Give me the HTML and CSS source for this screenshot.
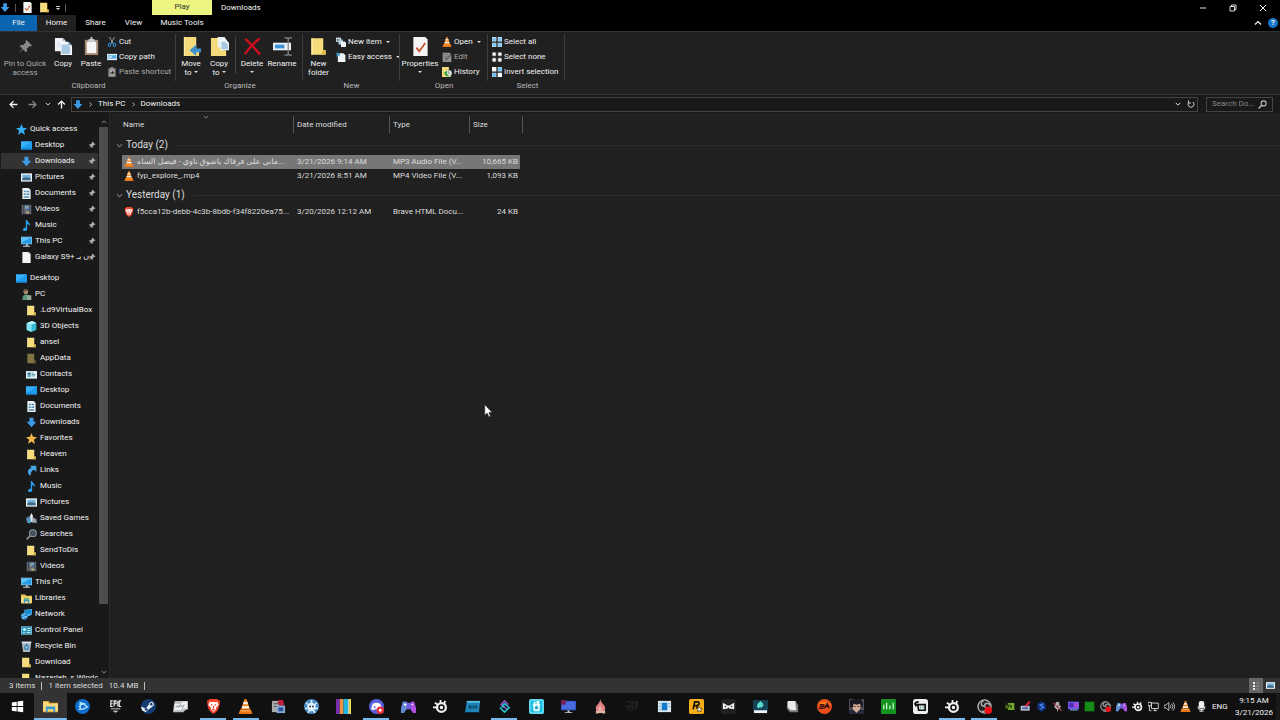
FILE: index.html
```html
<!DOCTYPE html>
<html lang="en">
<head>
<meta charset="utf-8">
<title>Downloads</title>
<link rel="stylesheet" href="styles.css">
</head>
<body>
<svg class="sprite" aria-hidden="true">
  <symbol id="down" viewBox="0 0 16 16"><path d="M5 1h6v6h4l-7 8-7-8h4z" fill="#3d9be6"/></symbol>
  <symbol id="check" viewBox="0 0 16 16"><path d="M2 0h10l2 2v14H2z" fill="#f4f4f4"/><path d="M4.500 9l2.500 3 5-7" fill="none" stroke="#c8562a" stroke-width="1.500"/></symbol>
  <symbol id="folder" viewBox="0 0 16 16"><path d="M2 1h10v10h2v4H2z" fill="#f7dc7c"/><path d="M12 11h2v4h-4z" fill="#e2b94c"/><path d="M2 1h1v14H2z" fill="#fff0ae"/></symbol>
  <symbol id="folder-dim" viewBox="0 0 16 16"><path d="M2 1h10v10h2v4H2z" fill="#837444"/><path d="M12 11h2v4h-4z" fill="#675b36"/></symbol>
  <symbol id="pin" viewBox="0 0 16 16"><path d="M9 1l6 6-1.500 1-1-.5-3 3 .2 2.500-1.200 1.200-3-3L1 15l3.800-4.500-3-3L3 6.300l2.500.2 3-3L8 2z" fill="currentColor"/></symbol>
  <symbol id="copy" viewBox="0 0 20 20"><path d="M1 1h8l3 3v11H1z" fill="#eef2f6"/><path d="M9 1l3 3H9zM3 6h6M3 8h6M3 10h6" fill="#a9b9c6" stroke="#bccbd8" stroke-width=".6"/><path d="M7 5h8l4 4v10H7z" fill="#f5f9fc"/><path d="M8 8h6l3 3v7H8z" fill="#a9cbe2"/><path d="M15 5l4 4h-4z" fill="#7da6c5"/></symbol>
  <symbol id="paste" viewBox="0 0 20 20"><path d="M3 3h14v16H3z" fill="#a58b72"/><path d="M5 5h10v12H5z" fill="#f5f5f5"/><path d="M7 3V2h2V0h2v2h2v1l1 2H6z" fill="#c7cdd2"/></symbol>
  <symbol id="cut" viewBox="0 0 16 16"><path d="M4 0l6 11M12 0L6 11" stroke="#9aa7b2" stroke-width="1.500"/><g fill="none" stroke="#2c84c9" stroke-width="1.800"><ellipse cx="4" cy="12.500" rx="2" ry="2.600"/><ellipse cx="12" cy="12.500" rx="2" ry="2.600"/></g></symbol>
  <symbol id="path" viewBox="0 0 16 16"><path d="M0 3h16v10H0z" fill="#e6f2fa"/><path d="M1 5h14v6H1z" fill="#5aaee0"/><path d="M2 6l1.500 4L5 7l1 3 1.500-4M9 10h1M12 10h1" fill="none" stroke="#fff" stroke-width="1"/></symbol>
  <symbol id="shortcut" viewBox="0 0 16 16"><path d="M2 2h12v14H2z" fill="#7d7d7d"/><path d="M4 4h8v10H4z" fill="#aaa"/><path d="M6 0h4l1 3H5z" fill="#8e8e8e"/><path d="M5 12c0-3 1-4 3-4V6l4 3-4 3v-2c-1 0-2 .5-3 2z" fill="#333"/></symbol>
  <symbol id="moveto" viewBox="0 0 20 20"><path d="M2 0h13v13h3v7H2z" fill="#f5da7b"/><path d="M2 0h1v20H2z" fill="#fff0ae"/><path d="M20 12h-5V8l-7 6 7 6v-4h5z" fill="#3d94cf"/></symbol>
  <symbol id="copyto" viewBox="0 0 20 20"><path d="M1 1h13v13h3v6H1z" fill="#f5da7b"/><path d="M8 0h7l2 2v9H8z" fill="#eef2f6"/><path d="M11 3h6l3 3v8h-9z" fill="#f5f9fc"/><path d="M12 5h4l3 3v5h-7z" fill="#a9cbe2"/></symbol>
  <symbol id="delete" viewBox="0 0 20 20"><path d="M2.500 2Q9 8 18 18.500M17.500 1.500Q9 8 2 18" fill="none" stroke="#c9101e" stroke-width="2.600"/></symbol>
  <symbol id="rename" viewBox="0 0 20 20"><path d="M0 6h19v8H0z" fill="#e9f1f8"/><path d="M2 8h10v4H2z" fill="#3b93d6"/><path d="M12 1h3l1 1 1-1h3M16 2v16M12 19h3l1-1 1 1h3" fill="none" stroke="#888" stroke-width="1.300"/></symbol>
  <symbol id="newitem" viewBox="0 0 16 16"><path d="M0 1h8v7H0z" fill="#d8e3ea"/><path d="M1 3h6v4H1z" fill="#6c8494"/><path d="M4 4h7v8H4z" fill="#b8cfdd"/><path d="M8 7h6l2 2v7H8z" fill="#f1f4f6"/></symbol>
  <symbol id="easy" viewBox="0 0 16 16"><path d="M3 2h9l3 3v11H3z" fill="#f0f3f5"/><path d="M0 1h6v6L4 5 1 9V4z" fill="#3c8fc5"/></symbol>
  <symbol id="cone" viewBox="0 0 16 16"><path d="M7 0h2l3.800 11H3.200z" fill="#f08019"/><path d="M6 3h4l.8 2.500H5.200zM4.700 7.500h6.600l.8 2.500H3.900z" fill="#f3eee6"/><path d="M2.500 11h11L15.500 16H.5z" fill="#e77412"/><path d="M3 12h10l.5 1.200h-11z" fill="#ffae52"/></symbol>
  <symbol id="edit" viewBox="0 0 16 16"><path d="M1 1h11l3 3v12H1z" fill="#929292"/><path d="M3 4h7M3 7h6M3 10h4" stroke="#666"/><path d="M16 4L7 13l-2 2 1-4 8-8z" fill="#555"/></symbol>
  <symbol id="history" viewBox="0 0 16 16"><path d="M0 0h11v11h3v5H0z" fill="#f5da7b"/><circle cx="10.500" cy="10" r="5" fill="#e3ebe5" stroke="#a8b9ad"/><path d="M10 6v4h3" fill="none" stroke="#667" /><path d="M3 9l5-3v3c0 2 1 4 4 5-5 2-8-1-8-4z" fill="#34a647"/></symbol>
  <symbol id="selall" viewBox="0 0 16 16"><path d="M0 0h7v7H0zM9 0h7v7H9zM0 9h7v7H0zM9 9h7v7H9z" fill="#bfe1f7"/><path d="M1 1h5v5H1zM10 1h5v5h-5zM1 10h5v5H1zM10 10h5v5h-5z" fill="#7cc3f1"/></symbol>
  <symbol id="selnone" viewBox="0 0 16 16"><path d="M1 1h5v5H1zM10 1h5v5h-5zM1 10h5v5H1zM10 10h5v5h-5z" fill="#fff" stroke="#bbb"/></symbol>
  <symbol id="selinv" viewBox="0 0 16 16"><path d="M0 0h7v7H0zM9 9h7v7H9z" fill="#f5f9fb"/><path d="M9 0h7v7H9zM0 9h7v7H0z" fill="#a9d5f3"/><path d="M10 1h5v5h-5zM1 10h5v5H1z" fill="#6cb8ec"/></symbol>
  <symbol id="star" viewBox="0 0 16 16"><path d="M8 0l2.200 5.600 5.800.4-4.500 3.700L13 16l-5-3.500L3 16l1.500-6.300L0 6l5.800-.4z" fill="currentColor"/></symbol>
  <symbol id="desktop" viewBox="0 0 16 16"><path d="M0 2h16v12H0z" fill="#1e9df0"/><path d="M0 12.500h16V14H0z" fill="#1178bd"/><path d="M0 2h16L0 12z" fill="#38b0fa"/></symbol>
  <symbol id="pictures" viewBox="0 0 16 16"><path d="M0 2h16v12H0z" fill="#eef1f3"/><path d="M2 4h12v8H2z" fill="#73b4dc"/><path d="M2 9q4-3 12 0v3H2z" fill="#426b86"/></symbol>
  <symbol id="documents" viewBox="0 0 16 16"><path d="M2 0h9l3 3v13H2z" fill="#edf3f6"/><path d="M4 4h3v2H4zM8 4h4v2H8zM4 8h3v2H4zM8 8h4v2H8zM4 12h8v2H4z" fill="#4e8fae"/></symbol>
  <symbol id="videos" viewBox="0 0 16 16"><path d="M1 1h14v14H1z" fill="#434852"/><path d="M5 2h7v6H5z" fill="#5187c4"/><path d="M5 9h7v5H5z" fill="#75757c"/><path d="M7 3h4v2H8v3H6zM8 11h4v3H8z" fill="#b2a67b"/><path d="M2 2v13M14 2v13" stroke="#aeb4bb" stroke-width="1" stroke-dasharray="1.500"/></symbol>
  <symbol id="music" viewBox="0 0 16 16"><path d="M7 0h2c0 3 5 4 4 9-1-3-3-3-4-3v7c0 4-6 4-6 1 0-2 2-3 4-2.500z" fill="#2c9ceb"/></symbol>
  <symbol id="pc" viewBox="0 0 16 16"><path d="M0 1h16v11H0z" fill="#8cc7e9"/><path d="M1 2h14v9H1z" fill="#229ce8"/><path d="M1 2h14L1 9z" fill="#63c3f8"/><path d="M7 12h3v2h3v1.500H3V14h4z" fill="#b8cfdb"/></symbol>
  <symbol id="file" viewBox="0 0 16 16"><path d="M2 0h9l3 3v13H2z" fill="#f5f5f5"/><path d="M11 0l3 3h-3z" fill="#bbb"/></symbol>
  <symbol id="user" viewBox="0 0 16 16"><circle cx="7" cy="4" r="3.500" fill="#b09270"/><path d="M2 16c0-6 2-8 5-8 5 0 7 3 7 8z" fill="#579775"/><path d="M4 1q5-2 6 2L5 4z" fill="#675544"/><path d="M9 9h6v7H8z" fill="#93a79a"/></symbol>
  <symbol id="cube" viewBox="0 0 16 16"><path d="M1 3l8-3 6 3v10l-7 3-7-3z" fill="#35bbd5"/><path d="M1 3l7 2v11l-7-3z" fill="#85e4ef"/><path d="M1 3l8-3 6 3-7 2z" fill="#bdf5f8"/></symbol>
  <symbol id="contacts" viewBox="0 0 16 16"><path d="M0 3h16v11H0z" fill="#e8f2f6"/><path d="M2 5h5v7H2z" fill="#67b1ca"/><circle cx="4.500" cy="7" r="1.500" fill="#345c70"/><path d="M8 6h3M8 8h6M8 10h5" stroke="#2a7895"/></symbol>
  <symbol id="links" viewBox="0 0 16 16"><path d="M6 1h9v9l-3-3c-4 1-5 4-5 8H5C1 10 3 5 8 4z" fill="#4aa3e5"/></symbol>
  <symbol id="games" viewBox="0 0 16 16"><path d="M0 8l5-4 2 9-5 2z" fill="#5c8ab2"/><path d="M8 0l2 4v9H6V4z" fill="#e2e7eb"/><path d="M10 6l5 3 1 5H9z" fill="#96a2ad"/><path d="M4 9h3v6H4z" fill="#37a9cf"/></symbol>
  <symbol id="lens" viewBox="0 0 16 16"><path d="M1 15l6-6" stroke="#888e94" stroke-width="2.500"/><circle cx="10" cy="6" r="5" fill="#45525e" stroke="#8997a2" stroke-width="1.500"/></symbol>
  <symbol id="libraries" viewBox="0 0 16 16"><path d="M0 2h6l2 2h8v11H0z" fill="#eec75b"/><path d="M1 6h14v9H1z" fill="#f9df8a"/><path d="M4 9h8v6h-2v-3H6v3H4z" fill="#3594bd"/><path d="M4 7h8v2H4z" fill="#71bc69"/></symbol>
  <symbol id="network" viewBox="0 0 16 16"><path d="M5 1l11-1v8l-4 2H5z" fill="#4fb3e6"/><path d="M6 2l9-1v6H6z" fill="#1686cf"/><circle cx="5" cy="10.500" r="5" fill="#288bc9"/><path d="M1 9q3 1 5-3M2 14q2-3 7-3" stroke="#98dbf8" fill="none" stroke-width="1.500"/></symbol>
  <symbol id="control" viewBox="0 0 16 16"><path d="M0 2h16v12H0z" fill="#8bd2e8"/><path d="M1 3h14v10H1z" fill="#2693b8"/><circle cx="5" cy="6.500" r="2.300" fill="#d8f3fb"/><path d="M9 5h5M9 8h5M3 11h3M8 11h6" stroke="#d8f3fb" stroke-width="1.300"/></symbol>
  <symbol id="recycle" viewBox="0 0 16 16"><path d="M1 1h14l-2 15H3z" fill="#aab9c2"/><path d="M1 1h14v2H1z" fill="#e1e8ec"/><path d="M5 9l3-4 3 4M5 9l1 3h4l1-3" stroke="#247eb7" stroke-width="1.600" fill="none"/></symbol>
  <symbol id="brave" viewBox="0 0 16 16"><path d="M4 0h8l1.500 1.500H15L14.500 5c-.5 5-2 8-6.500 11C3.500 13 2 10 1.500 5L1 1.500h1.500z" fill="#f4442b"/><path d="M4 3l2.500.5L8 3l1.500.5L12 3l1.500 3-3 3.500.5 1.500-3 2.500-3-2.500.5-1.500L2.500 6z" fill="#fff"/><path d="M4.500 5l2.500.8-.7 1.700zM11.500 5L9 5.800l.7 1.700zM8 6l.8 2.800L8 10l-.8-1.200zM6 11l2-1 2 1-2 1.500z" fill="#f4442b"/></symbol>
  <symbol id="win" viewBox="0 0 16 16"><path d="M1 3l6-1v5.500H1zM8 1.800L15 1v6.500H8zM1 8.500h6V14l-6-.9zM8 8.500h7V15l-7-.9z" fill="#fff"/></symbol>
  <symbol id="explorer" viewBox="0 0 16 16"><path d="M0 2h6l1.500 2H16v10H0z" fill="#dba936"/><path d="M1 3h4l1 2h10v8H0V4z" fill="#f8dc79"/><path d="M3 8h10v6h-2v-3H5v3H3z" fill="#3f9ad0"/></symbol>
  <symbol id="bnet" viewBox="0 0 16 16"><circle cx="8" cy="8" r="8" fill="#116dcb"/><path d="M5.500 3.500c4 1 6 3 7.500 5-3 2-6 3-9 2.500M5.500 3.500v8M4 8c2-2 5-3 7-3" fill="none" stroke="#b6e8ff" stroke-width="1.400"/></symbol>
  <symbol id="epic" viewBox="0 0 16 16"><path d="M2 0h12v13l-6 3-6-3z" fill="#191919"/><path d="M5 2H3v6h2M3 5h2M6.500 8V2h2v3h-2M10.500 2v6M14 2h-2v6h2" stroke="#eee" fill="none" stroke-width="1.200"/><path d="M3 10.500h10M6 13h4l-2 1z" stroke="#ccc" fill="#ccc" stroke-width="1"/></symbol>
  <symbol id="steam" viewBox="0 0 16 16"><circle cx="8" cy="8" r="8" fill="#123d70"/><path d="M0 8l5 2 4-5 3-2 2 3-3 3-4 3-2 2-4-2z" fill="#e5edf5"/><circle cx="11" cy="5.500" r="2" fill="#123d70" stroke="#fff"/><circle cx="5.500" cy="11" r="1.500" fill="#244d7b"/></symbol>
  <symbol id="cards" viewBox="0 0 16 16"><path d="M2 2h14v9l-3 1-2 2H0l1-8z" fill="#b9bec2"/><path d="M2 5h7v7H1zM9 3h6v7H9z" fill="#f0f0f0"/><path d="M3 9l2-2 1 2 2-3 2 3 2-3" fill="none" stroke="#718692"/></symbol>
  <symbol id="tool" viewBox="0 0 16 16"><path d="M1 2h8v12H1z" fill="#aaa"/><path d="M3 5h6M3 8h4" stroke="#555"/><path d="M8 1h5l1 5-3 2-4-3z" fill="#bd2038"/><path d="M6 7h9v8H6z" fill="#86a8d2"/><path d="M8 9h5v4H8z" fill="#294f93"/></symbol>
  <symbol id="snow" viewBox="0 0 16 16"><circle cx="8" cy="8" r="8" fill="#4b8cc8"/><circle cx="8" cy="8.500" r="4.500" fill="#eef7fc"/><path d="M8 1v6M2 4l5 4M14 4L9 8M1 10h5M15 10h-5M4 15l3-4M12 15l-3-4" stroke="#d3ebfa" stroke-width="1.600"/><circle cx="6.500" cy="8" r="1" fill="#235"/><circle cx="9.500" cy="8" r="1" fill="#235"/></symbol>
  <symbol id="stripes" viewBox="0 0 16 16"><path d="M0 0h4v16H0z" fill="#7a2caf"/><path d="M4 0h4v16H4z" fill="#ed9141"/><path d="M8 0h5v16H8z" fill="#22b6df"/><path d="M13 0h1v16h-1z" fill="#eee"/><path d="M14 0h2v16h-2z" fill="#eee34d"/></symbol>
  <symbol id="discord" viewBox="0 0 16 16"><circle cx="8" cy="8" r="8" fill="#5660df"/><path d="M4 5l3-1h2l3 1 2 6-3 1-1-1H6l-1 1-3-1z" fill="#fff"/><circle cx="6" cy="8.500" r="1" fill="#5660df"/><circle cx="12" cy="12" r="4" fill="#e9333d"/><circle cx="12" cy="12" r="1.500" fill="#fff"/></symbol>
  <symbol id="pad" viewBox="0 0 16 16"><path d="M2 3h4l1 1h3l1-1h3l2 7v5h-3l-3-4H6l-3 4H0v-5z" fill="#745ee0"/><path d="M2 3h4v7l-3 5H0v-5z" fill="#5f8fd0"/><path d="M11 3h3l2 7v5h-3l-2-3z" fill="#b04fe0"/><path d="M3 6h3M4.500 4.500v3M11 6h2" stroke="#fff"/></symbol>
  <symbol id="steel" viewBox="0 0 16 16"><circle cx="9" cy="9" r="4.700" fill="none" stroke="#eee" stroke-width="2.400"/><circle cx="9" cy="9" r="1.800" fill="#fff"/><path d="M2 4l3 2M0 9h4M8 1v3M13 2l-1 3" stroke="#fff" stroke-width="1.800"/></symbol>
  <symbol id="bluecard" viewBox="0 0 16 16"><path d="M2 2h14l-1 12H0z" fill="#1e83b7"/><path d="M2 2h14v2H2z" fill="#55c0e5"/><path d="M4 7h3v3H4zM8 7h2v3H8zM11 7h2v3h-2z" fill="#0d4767"/></symbol>
  <symbol id="esse" viewBox="0 0 16 16"><path d="M4 6.500L8 2l4 4M4 6l7 5" fill="none" stroke="#8c52c8" stroke-width="1.800"/><path d="M3 9l5 5 5-5-5-4-2 2M5 9l3-2" fill="none" stroke="#20cad0" stroke-width="1.600"/></symbol>
  <symbol id="bin" viewBox="0 0 16 16"><rect width="16" height="16" rx="2" fill="#16bfe2"/><rect x="1" y="1" width="14" height="14" rx="1" fill="none" stroke="#afeffa"/><path d="M4 5h8l-1 8H5z" fill="#e7fafd"/><path d="M5 3h2v2H5zM8 2h3v3H8z" fill="#fff"/><path d="M6 9l2-2 2 2-1 2H7z" fill="#25a2cb"/></symbol>
  <symbol id="monitor" viewBox="0 0 16 16"><path d="M0 2h16v10H0z" fill="#3657c3"/><path d="M1 3h14v8H1z" fill="#496ce1"/><path d="M0 1h5v5H0z" fill="#791d59"/><path d="M7 12h2v2h3v1H4v-1h3z" fill="#c3cfe0"/></symbol>
  <symbol id="fire" viewBox="0 0 16 16"><path d="M8 0c0 4 5 6 5 10 0 3-2 4-5 4s-5-1-5-4c0-4 3-3 5-10z" fill="#dd7f84"/><path d="M8 6c0 3 3 4 2 6l-2 2-3-2c0-3 2-3 3-6z" fill="#f0a6a4"/><path d="M3 15l10-2M3 13l10 2" stroke="#d7b5a0" stroke-width="1.500"/></symbol>
  <symbol id="dark" viewBox="0 0 16 16"><path d="M1 3h5v5H2l5 5M8 3v9M8 4l5-1-2 5-2 1M14 4l-3 8" stroke="#222" fill="none" stroke-width="1.500"/></symbol>
  <symbol id="window" viewBox="0 0 16 16"><path d="M1 2h14v12H1z" fill="#dae7ef"/><path d="M5 4h6v8H5z" fill="#147ad0"/><path d="M2 5h2M2 8h2M2 11h2M12 5h2M12 8h2" stroke="#7ab"/></symbol>
  <symbol id="rock" viewBox="0 0 16 16"><rect width="16" height="16" rx="2" fill="#f5ae18"/><path d="M4.500 11l1.500-8h3c3 0 2 4-1 4H5.500M8 7l1 3" fill="none" stroke="#17120a" stroke-width="1.800"/><path d="M11 8l1 2h2l-1.500 1.500.5 2-2-1-2 1 .5-2L8 10h2z" fill="#fff" stroke="#17120a" stroke-width=".6"/></symbol>
  <symbol id="mask" viewBox="0 0 16 16"><rect width="16" height="16" rx="2" fill="#202020"/><path d="M2 4l5 3h2l5-3v7l-5-1-1-1-1 1-5 1z" fill="#f4f4f4"/><path d="M4 7l2 1-2 1zM12 7l-2 1 2 1z" fill="#222"/></symbol>
  <symbol id="edge" viewBox="0 0 16 16"><rect y="1" width="16" height="12" rx="1" fill="#154254"/><path d="M5 5l3-3 3 3-5 5-2-2zM8 6h4L8 10z" fill="#58dbc8"/><path d="M1 12h14v3H1z" fill="#e7f2fb"/></symbol>
  <symbol id="white" viewBox="0 0 16 16"><path d="M3 2h8l3 4v8H5L2 10V4z" fill="#777"/><path d="M3 2h8l1 10H6L3 9z" fill="#e9e9e9"/></symbol>
  <symbol id="ea" viewBox="0 0 16 16"><circle cx="8" cy="8" r="8" fill="#ed4d1c"/><path d="M1 6q7-7 14 0z" fill="#ff7b1c"/><path d="M3 6h5M3 8h5M2 10h5M8 10l3-5 2 5M10 8h3" stroke="#391211" fill="none" stroke-width="1.500"/></symbol>
  <symbol id="portrait" viewBox="0 0 16 16"><path d="M0 0h16v16H0z" fill="#54505b"/><path d="M4 3h8v8l-4 4-4-4z" fill="#d7ad9b"/><path d="M1 9V1l5-1h7l2 5-1 5-2-5-4 1-3-1-1 4z" fill="#171923"/><path d="M0 16v-4l4-1 4 4 4-4 4 1v4z" fill="#252b38"/><path d="M5 8h2M9 8h2" stroke="#332b32"/></symbol>
  <symbol id="bars" viewBox="0 0 16 16"><rect width="16" height="16" rx="1" fill="#149321"/><path d="M3 6v5M6 4v7M9.500 7v4M13 4v7" stroke="#d5ffd7" stroke-width="1.300"/></symbol>
  <symbol id="cast" viewBox="0 0 16 16"><rect width="16" height="16" rx="3" fill="#eee"/><path d="M5 6h8v6H6zM2 6q0-3 4-3M3 8V6h3" fill="none" stroke="#111" stroke-width="1.800"/><path d="M8 8v2M11 8v2" stroke="#1b9f85"/></symbol>
  <symbol id="obs" viewBox="0 0 16 16"><circle cx="8" cy="8" r="7" fill="#252326" stroke="#bbb" stroke-width="1.400"/><path d="M8 8C3 7 4 3 7 2M8 8c0-5 5-4 6-1M8 8c4 3 0 6-3 5" fill="none" stroke="#aaa" stroke-width="1.500"/><circle cx="12" cy="12" r="4" fill="#ef101a"/></symbol>
  <symbol id="nvidia" viewBox="0 0 16 16"><path d="M1 3h14v10H1z" fill="#18240f"/><path d="M6 3h9v10H6v-2c5 0 6-3 6-3s-2-3-6-3zM6 6c-3 0-4 2-4 2s2 3 5 3c2 0 3-3 3-3S9 6 6 6z" fill="#71a928"/><circle cx="6" cy="8" r="1.500" fill="#18240f"/></symbol>
  <symbol id="traytool" viewBox="0 0 16 16"><path d="M1 7h13v7H1z" fill="#c3c9dc"/><path d="M3 9h9v3H3z" fill="#536ba2"/><path d="M8 8l6-7" stroke="#e02443" stroke-width="3"/></symbol>
  <symbol id="blue" viewBox="0 0 16 16"><path d="M8 0l6 4v8l-6 4-6-4V4z" fill="#122e73"/><path d="M11 4L6 6l5 3-5 3" stroke="#4488ef" stroke-width="2" fill="none"/></symbol>
  <symbol id="microff" viewBox="0 0 16 16"><path d="M6 2h4v7l-2 2-2-2zM4 7c0 6 8 6 8 0M8 12v3" stroke="#ddd" fill="#aaa"/><path d="M2 3l12 11" stroke="#d25464" stroke-width="1.500"/></symbol>
  <symbol id="traypc" viewBox="0 0 16 16"><path d="M0 1h16v11H0z" fill="#6b5be8"/><path d="M2 3h6v6H2z" fill="#4b28b4"/><path d="M9 3h5v6H9z" fill="#b446c8"/><path d="M3 12h11v2H3z" fill="#728db7"/></symbol>
  <symbol id="green" viewBox="0 0 16 16"><path d="M1 1h14v14H1z" fill="#168a17"/></symbol>
  <symbol id="ethernet" viewBox="0 0 16 16"><path d="M5 3h10v8H5zM8 14h5M10 11v3M0 2h5v5H0zM2 7v7h3" fill="none" stroke="#ddd" stroke-width="1.300"/></symbol>
  <symbol id="sound" viewBox="0 0 16 16"><path d="M0 6h3l4-4v12l-4-4H0zM9 6q2 2 0 4M11 4q4 4 0 8M13 2q5 6 0 12" fill="none" stroke="#ddd" stroke-width="1.200"/></symbol>
  <symbol id="mic" viewBox="0 0 16 16"><rect x="4" y="0" width="8" height="11" rx="3" fill="#eee"/><path d="M3 8c0 6 10 6 10 0M8 12v3M5 15h6" fill="none" stroke="#ddd" stroke-width="1.600"/></symbol>
  <symbol id="arrow" viewBox="0 0 16 16"><path d="M15 8H2M8 2L2 8l6 6" fill="none" stroke="currentColor" stroke-width="2.400"/></symbol>
  <symbol id="chev" viewBox="0 0 16 16"><path d="M2 5l6 6 6-6" fill="none" stroke="currentColor" stroke-width="2.400"/></symbol>
  <symbol id="search" viewBox="0 0 16 16"><circle cx="10" cy="6" r="4.500" fill="none" stroke="#bbb" stroke-width="2"/><path d="M7 9l-6 6" stroke="#bbb" stroke-width="2.500"/></symbol>
</svg>

<header class="titlebar">
  <div class="quick">
    <svg class="i10"><use href="#down"/></svg><i class="bar"></i>
    <button aria-label="Properties"><svg class="i11"><use href="#check"/></svg></button>
    <button aria-label="New folder"><svg class="i11"><use href="#folder"/></svg></button>
    <button class="drop" aria-label="Customize"><i class="dash"></i><i class="caret"></i></button><i class="bar"></i>
  </div>
  <div class="context">Play</div>
  <h1>Downloads</h1>
  <div class="window-buttons">
    <button aria-label="Minimize"><svg class="i8" viewBox="0 0 8 8"><path d="M1 4h6" stroke="#ddd"/></svg></button>
    <button aria-label="Restore"><svg class="i8" viewBox="0 0 8 8"><path d="M1 2.500h4.500V7H1zM2.500 2V1H7v4.500H6" fill="none" stroke="#ddd"/></svg></button>
    <button aria-label="Close"><svg class="i8" viewBox="0 0 8 8"><path d="M1 1l6 6M7 1L1 7" stroke="#eee"/></svg></button>
  </div>
</header>
<nav class="tabs">
  <button class="file">File</button><button class="home">Home</button><button class="share">Share</button><button class="view">View</button><button class="tools">Music Tools</button>
  <div class="help"><button aria-label="Collapse ribbon"><svg class="i8 up"><use href="#chev"/></svg></button><button class="question" aria-label="Help">?</button></div>
</nav>

<section class="ribbon">
  <div class="group clipboard"><div class="tools-row">
    <button class="big w48 off"><svg class="i19 pinicon"><use href="#pin"/></svg><span>Pin to Quick<br>access</span></button>
    <button class="big w28"><svg class="i19"><use href="#copy"/></svg><span>Copy</span></button>
    <button class="big w28"><svg class="i19"><use href="#paste"/></svg><span>Paste</span></button>
    <div class="small"><button><svg><use href="#cut"/></svg>Cut</button><button><svg><use href="#path"/></svg>Copy path</button><button class="off"><svg><use href="#shortcut"/></svg>Paste shortcut</button></div>
  </div><h2>Clipboard</h2></div>
  <div class="group organize"><div class="tools-row">
    <button class="big w28"><svg class="i19"><use href="#moveto"/></svg><span>Move<br>to <i class="caret"></i></span></button>
    <button class="big w28"><svg class="i19"><use href="#copyto"/></svg><span>Copy<br>to <i class="caret"></i></span></button>
    <i class="split"></i>
    <button class="big w28"><svg class="i19"><use href="#delete"/></svg><span>Delete<br><i class="caret"></i></span></button>
    <button class="big w32"><svg class="i19"><use href="#rename"/></svg><span>Rename</span></button>
  </div><h2>Organize</h2></div>
  <div class="group new"><div class="tools-row">
    <button class="big w32"><svg class="i19"><use href="#folder"/></svg><span>New<br>folder</span></button>
    <div class="small"><button><svg><use href="#newitem"/></svg>New item <i class="caret"></i></button><button><svg><use href="#easy"/></svg>Easy access <i class="caret"></i></button></div>
  </div><h2>New</h2></div>
  <div class="group open"><div class="tools-row">
    <button class="big w40"><svg class="i19"><use href="#check"/></svg><span>Properties<br><i class="caret"></i></span></button>
    <div class="small"><button><svg><use href="#cone"/></svg>Open <i class="caret"></i></button><button class="off"><svg><use href="#edit"/></svg>Edit</button><button><svg><use href="#history"/></svg>History</button></div>
  </div><h2>Open</h2></div>
  <div class="group select"><div class="tools-row">
    <div class="small"><button><svg><use href="#selall"/></svg>Select all</button><button><svg><use href="#selnone"/></svg>Select none</button><button><svg><use href="#selinv"/></svg>Invert selection</button></div>
  </div><h2>Select</h2></div>
</section>

<div class="addressbar">
  <button class="back" aria-label="Back"><svg class="i9"><use href="#arrow"/></svg></button>
  <button class="forward" aria-label="Forward"><svg class="i9"><use href="#arrow"/></svg></button>
  <button class="recent" aria-label="Recent"><svg class="i6"><use href="#chev"/></svg></button>
  <button class="parent" aria-label="Up"><svg class="i9"><use href="#arrow"/></svg></button>
  <div class="crumbs"><svg class="i10"><use href="#down"/></svg><svg class="i5 right"><use href="#chev"/></svg><a href="#">This PC</a><svg class="i5 right"><use href="#chev"/></svg><a href="#">Downloads</a>
    <span class="crumb-actions"><svg class="i6"><use href="#chev"/></svg><svg class="i8" viewBox="0 0 16 16"><path d="M4 4a6 6 0 1 0 8 0M3 1v5h5" fill="none" stroke="#ccc" stroke-width="2"/></svg></span></div>
  <label class="search"><input type="text" aria-label="Search Downloads" placeholder="Search Do..."><svg class="i9"><use href="#search"/></svg></label>
</div>

<main class="workspace">
  <nav class="sidebar">
    <ul>
      <li class="l0 cyan"><svg><use href="#star"/></svg><span>Quick access</span></li>
      <li><svg><use href="#desktop"/></svg><span>Desktop</span><svg class="tack"><use href="#pin"/></svg></li>
      <li class="current"><svg><use href="#down"/></svg><span>Downloads</span><svg class="tack"><use href="#pin"/></svg></li>
      <li><svg><use href="#pictures"/></svg><span>Pictures</span><svg class="tack"><use href="#pin"/></svg></li>
      <li><svg><use href="#documents"/></svg><span>Documents</span><svg class="tack"><use href="#pin"/></svg></li>
      <li><svg><use href="#videos"/></svg><span>Videos</span><svg class="tack"><use href="#pin"/></svg></li>
      <li><svg><use href="#music"/></svg><span>Music</span><svg class="tack"><use href="#pin"/></svg></li>
      <li><svg><use href="#pc"/></svg><span>This PC</span><svg class="tack"><use href="#pin"/></svg></li>
      <li><svg><use href="#file"/></svg><span>Galaxy S9+ <bdi>ں بـ</bdi></span><svg class="tack"><use href="#pin"/></svg></li>
    </ul>
    <ul>
      <li class="l0"><svg><use href="#desktop"/></svg><span>Desktop</span></li>
      <li><svg><use href="#user"/></svg><span>PC</span></li>
      <li class="l2"><svg><use href="#folder"/></svg><span>.Ld9VirtualBox</span></li>
      <li class="l2"><svg><use href="#cube"/></svg><span>3D Objects</span></li>
      <li class="l2"><svg><use href="#folder"/></svg><span>ansel</span></li>
      <li class="l2"><svg><use href="#folder-dim"/></svg><span>AppData</span></li>
      <li class="l2"><svg><use href="#contacts"/></svg><span>Contacts</span></li>
      <li class="l2"><svg><use href="#desktop"/></svg><span>Desktop</span></li>
      <li class="l2"><svg><use href="#documents"/></svg><span>Documents</span></li>
      <li class="l2"><svg><use href="#down"/></svg><span>Downloads</span></li>
      <li class="l2 gold"><svg><use href="#star"/></svg><span>Favorites</span></li>
      <li class="l2"><svg><use href="#folder"/></svg><span>Heaven</span></li>
      <li class="l2"><svg><use href="#links"/></svg><span>Links</span></li>
      <li class="l2"><svg><use href="#music"/></svg><span>Music</span></li>
      <li class="l2"><svg><use href="#pictures"/></svg><span>Pictures</span></li>
      <li class="l2"><svg><use href="#games"/></svg><span>Saved Games</span></li>
      <li class="l2"><svg><use href="#lens"/></svg><span>Searches</span></li>
      <li class="l2"><svg><use href="#folder"/></svg><span>SendToDis</span></li>
      <li class="l2"><svg><use href="#videos"/></svg><span>Videos</span></li>
      <li><svg><use href="#pc"/></svg><span>This PC</span></li>
      <li><svg><use href="#libraries"/></svg><span>Libraries</span></li>
      <li><svg><use href="#network"/></svg><span>Network</span></li>
      <li><svg><use href="#control"/></svg><span>Control Panel</span></li>
      <li><svg><use href="#recycle"/></svg><span>Recycle Bin</span></li>
      <li><svg><use href="#folder"/></svg><span>Download</span></li>
      <li><svg><use href="#folder"/></svg><span>Nazarieh_s Windo</span></li>
    </ul>
  </nav>
  <div class="scroll"><svg class="i6 up"><use href="#chev"/></svg><div class="track"><div class="thumb"></div></div><svg class="i6"><use href="#chev"/></svg></div>
  <section class="files">
    <table>
      <colgroup><col class="c-name"><col class="c-date"><col class="c-type"><col class="c-size"><col></colgroup>
      <thead><tr><th>Name<svg class="i6 sort"><use href="#chev"/></svg></th><th>Date modified</th><th>Type</th><th>Size</th><td></td></tr></thead>
      <tbody>
        <tr class="section"><th colspan="5"><div><svg class="i7"><use href="#chev"/></svg>Today (2)</div></th></tr>
        <tr class="selected"><td><div class="name"><svg><use href="#cone"/></svg><span dir="rtl">...ماني على فرقاك ياشوق ناوي - فيصل الساه</span></div></td><td>3/21/2026 9:14 AM</td><td>MP3 Audio File (V...</td><td class="size">10,665 KB</td><td></td></tr>
        <tr><td><div class="name"><svg><use href="#cone"/></svg><span>fyp_explore_.mp4</span></div></td><td>3/21/2026 8:51 AM</td><td>MP4 Video File (V...</td><td class="size">1,093 KB</td><td></td></tr>
        <tr class="section"><th colspan="5"><div><svg class="i7"><use href="#chev"/></svg>Yesterday (1)</div></th></tr>
        <tr><td><div class="name"><svg><use href="#brave"/></svg><span>f5cca12b-debb-4c3b-8bdb-f34f8220ea75...</span></div></td><td>3/20/2026 12:12 AM</td><td>Brave HTML Docu...</td><td class="size">24 KB</td><td></td></tr>
      </tbody>
    </table>
  </section>
</main>

<footer class="status"><span>3 items</span><i></i><span>1 item selected</span><span class="total">10.4 MB</span><i></i>
  <div class="views"><button class="on" aria-label="Details"><svg class="i8" viewBox="0 0 8 8"><path d="M1 0h2v2H1zM1 3h2v2H1zM1 6h2v2H1z" fill="#eee"/><path d="M4 1h3M4 4h3M4 7h3" stroke="#aaa" stroke-width=".6"/></svg></button><button aria-label="Thumbnails"><svg class="i9"><use href="#pictures"/></svg></button></div>
</footer>

<nav class="taskbar">
  <button class="start" aria-label="Start"><svg><use href="#win"/></svg></button>
  <div class="pinned">
    <button class="run active" aria-label="Explorer"><svg><use href="#explorer"/></svg></button><button aria-label="Battle.net"><svg><use href="#bnet"/></svg></button><button aria-label="Epic Games"><svg><use href="#epic"/></svg></button><button aria-label="Steam"><svg><use href="#steam"/></svg></button><button aria-label="Monitor"><svg><use href="#cards"/></svg></button><button class="run" aria-label="Brave"><svg><use href="#brave"/></svg></button><button class="run" aria-label="VLC"><svg><use href="#cone"/></svg></button><button aria-label="Tool"><svg><use href="#tool"/></svg></button><button aria-label="Snow"><svg><use href="#snow"/></svg></button><button aria-label="Colors"><svg><use href="#stripes"/></svg></button>
  </div>
  <div class="apps">
    <button class="run" aria-label="Discord"><svg><use href="#discord"/></svg></button><button aria-label="Controller"><svg><use href="#pad"/></svg></button><button aria-label="SteelSeries"><svg><use href="#steel"/></svg></button><button aria-label="Memory"><svg><use href="#bluecard"/></svg></button><button class="run" aria-label="Streaming"><svg><use href="#esse"/></svg></button><button aria-label="Uninstaller"><svg><use href="#bin"/></svg></button><button aria-label="Display"><svg><use href="#monitor"/></svg></button><button aria-label="Campfire"><svg><use href="#fire"/></svg></button><button aria-label="Game"><svg><use href="#dark"/></svg></button><button aria-label="Window"><svg><use href="#window"/></svg></button><button aria-label="Rockstar"><svg><use href="#rock"/></svg></button><button aria-label="Mask"><svg><use href="#mask"/></svg></button><button aria-label="Editor"><svg><use href="#edge"/></svg></button><button aria-label="Notes"><svg><use href="#white"/></svg></button><button aria-label="EA"><svg><use href="#ea"/></svg></button><button aria-label="Portrait"><svg><use href="#portrait"/></svg></button><button aria-label="Levels"><svg><use href="#bars"/></svg></button><button aria-label="Cast"><svg><use href="#cast"/></svg></button><button class="run" aria-label="SteelSeries GG"><svg><use href="#steel"/></svg></button><button class="run" aria-label="OBS"><svg><use href="#obs"/></svg></button>
  </div>
  <div class="tray">
    <svg><use href="#nvidia"/></svg><svg><use href="#traytool"/></svg><svg><use href="#blue"/></svg><svg><use href="#microff"/></svg><svg><use href="#traypc"/></svg><svg><use href="#green"/></svg><svg><use href="#obs"/></svg><svg><use href="#pad"/></svg><svg><use href="#steel"/></svg><svg><use href="#ethernet"/></svg><svg><use href="#sound"/></svg><svg><use href="#cone"/></svg><svg><use href="#mic"/></svg>
    <span class="lang">ENG</span><time>9:15 AM<br>3/21/2026</time>
  </div>
</nav>
<svg class="cursor" viewBox="0 0 8 13"><path d="M.5.500v10l2.300-2 1.500 3.500 1.600-.7-1.500-3.300h3z" fill="#fff" stroke="#222" stroke-width=".6"/></svg>
</body>
</html>
```
FILE: styles.css
```css
* { box-sizing: border-box; }
body {
  margin: 0;
  height: 100vh;
  display: flex;
  flex-direction: column;
  overflow: hidden;
  background: #202020;
  color: #f2f2f2;
  font: 8px/10px Roboto, "DejaVu Sans", sans-serif;
}
button { margin: 0; padding: 0; border: 0; background: none; color: inherit; font: inherit; white-space: nowrap; }
h1, h2, ul { margin: 0; padding: 0; font: inherit; }
svg { display: block; flex: none; width: 11px; height: 11px; }
.sprite { position: absolute; width: 0; height: 0; }
.i5 { width: 5px; height: 5px; }
.i6 { width: 6px; height: 6px; }
.i7 { width: 7px; height: 7px; }
.i8 { width: 8px; height: 8px; }
.i9 { width: 9px; height: 9px; }
.i10 { width: 10px; height: 11px; }
.i11 { width: 11px; height: 11px; }
.i19 { width: 19px; height: 19px; }
.up { transform: rotate(180deg); }
.right { transform: rotate(-90deg); }
.caret { display: inline-block; border: 2px solid transparent; border-top-color: #ddd; border-bottom: 0; vertical-align: 2px; }

.titlebar { flex: none; height: 15px; display: flex; align-items: center; background: #000; }
.quick { width: 152px; display: flex; align-items: center; gap: 5px; }
.quick .bar { width: 1px; height: 8px; background: #555; }
.quick button { margin-left: 1px; }
.quick .drop { display: flex; flex-direction: column; align-items: center; gap: 1px; }
.dash { width: 4px; height: 1px; background: #ccc; }
.context { width: 60px; height: 15px; line-height: 14px; text-align: center; background: #edf47f; color: #333; }
.titlebar h1 { margin-left: 9px; }
.window-buttons { margin-left: auto; padding-right: 2px; display: flex; }
.window-buttons button { width: 30px; display: grid; place-items: center; }

.tabs { flex: none; height: 16px; display: flex; background: #000; }
.file { width: 37px; background: #0965b0; }
.home { width: 39px; background: #202020; }
.share { width: 39px; }
.view { width: 37px; }
.tools { width: 60px; }
.help { margin-left: auto; padding-right: 2px; display: flex; align-items: center; gap: 6px; }
.question { width: 10px; height: 10px; border-radius: 50%; background: #1676c9; font-weight: 700; line-height: 10px; }

.ribbon { flex: none; height: 64px; display: flex; border-top: 1px solid #333; border-bottom: 1px solid #353535; background: #202020; }
.group { position: relative; display: flex; flex-direction: column; }
.group::after { content: ""; position: absolute; right: 0; top: 2px; height: 47px; border-right: 1px solid #3c3c3c; }
.clipboard { width: 176px; padding-left: 1px; }
.organize { width: 127px; padding-left: 1px; }
.new { width: 97px; }
.open { width: 88px; }
.select { width: 77px; padding-left: 2px; }
.tools-row { flex: 1; display: flex; }
.group h2 { height: 14px; line-height: 12px; text-align: center; color: #bbb; }
.big { display: flex; flex-direction: column; align-items: center; padding-top: 5px; gap: 3px; line-height: 9px; }
.w28 { width: 28px; }
.w32 { width: 32px; }
.w40 { width: 40px; }
.w48 { width: 48px; }
.off { color: #aaa; }
.pinicon { padding: 2px; color: #888; }
.small { padding: 2px 0 0 2px; }
.small button { height: 15px; display: flex; align-items: center; gap: 2px; }
.small svg { width: 10px; height: 10px; }
.small .caret { margin-left: 2px; }
.split { width: 1px; height: 37px; margin: 5px 2px 0; background: #444; }

.addressbar { flex: none; height: 18px; display: flex; align-items: center; padding: 0 7px; background: #191919; }
.back, .forward, .recent, .parent { height: 14px; display: grid; place-items: center; }
.back { width: 12px; }
.forward { width: 26px; color: #888; }
.forward svg { transform: rotate(180deg); }
.recent { width: 6px; }
.parent { width: 20px; }
.parent svg { transform: rotate(90deg); }
.crumbs { flex: 1; height: 15px; display: flex; align-items: center; gap: 5px; padding: 0 1px; border: 1px solid #444; }
.crumbs a { color: inherit; text-decoration: none; }
.crumb-actions { margin-left: auto; padding-right: 1px; display: flex; align-items: center; gap: 6px; }
.search { width: 67px; height: 15px; margin-left: 8px; display: flex; align-items: center; padding: 0 5px; border: 1px solid #444; }
.search input { flex: 1; min-width: 0; padding: 0; border: 0; background: none; color: #aaa; font: inherit; }
.search input::placeholder { color: #888; }

.workspace { flex: 1; min-height: 0; display: flex; }
.sidebar { width: 98px; padding: 8px 0 0 1px; overflow: hidden; background: #191919; }
.sidebar ul { list-style: none; }
.sidebar ul + ul { margin-top: 5px; }
.sidebar li { height: 16px; display: flex; align-items: center; gap: 3px; padding: 0 2px 0 20px; white-space: nowrap; }
.sidebar li.l0 { padding-left: 15px; }
.sidebar li.l2 { padding-left: 25px; }
.sidebar span { flex: 1; min-width: 0; }
.sidebar .tack { width: 8px; height: 8px; color: #aaa; }
.sidebar .current { background: #333; }
.cyan svg { color: #35aef0; }
.gold svg { color: #f7b84b; }
.scroll { width: 12px; display: flex; flex-direction: column; align-items: center; padding: 6px 0 3px; background: #191919; color: #999; border-right: 1px solid #2a2a2a; }
.track { flex: 1; align-self: stretch; padding: 2px 1px 0; }
.thumb { height: 88%; background: #4d4d4d; }

.files { flex: 1; min-width: 0; padding: 3px 0 0 12px; background: #202020; }
table { width: 100%; table-layout: fixed; border-collapse: separate; border-spacing: 0; }
.c-name { width: 172px; }
.c-date { width: 96px; }
.c-type { width: 80px; }
.c-size { width: 53px; }
th, td { padding: 0 0 0 3px; text-align: left; font-weight: 400; white-space: nowrap; }
thead th { position: relative; height: 17px; border-right: 1px solid #555; color: #ddd; }
thead th:first-child { padding-left: 1px; }
.sort { position: absolute; left: 81px; top: -2px; color: #888; }
.section th { height: 22px; padding: 2px 0 0; font-size: 10px; }
.section div { margin-left: -6px; display: flex; align-items: center; gap: 3px; color: #ddd; }
.section svg { color: #777; }
.section div::after { content: ""; flex: 1; height: 1px; margin-left: 5px; background: #2b2b2b; }
tbody td { height: 14px; color: #ddd; }
tbody td:first-child { padding-left: 2px; }
.name { display: flex; align-items: center; gap: 3px; }
.name svg { width: 10px; height: 10px; }
.size { text-align: right; padding-right: 2px; border-right: 3px solid transparent; background-clip: padding-box; }
.selected td:not(:last-child) { background-color: #777; }

.status { flex: none; height: 15px; display: flex; align-items: center; gap: 6px; padding: 0 3px 0 9px; background: #333; color: #ddd; }
.status i { width: 1px; height: 8px; background: #bbb; }
.views { margin-left: auto; display: flex; align-items: center; }
.views button { width: 14px; height: 15px; display: grid; place-items: center; }
.views .on { background: #666; }

.taskbar { flex: none; height: 27px; display: flex; background: #101010; }
.taskbar button { flex: 1; display: grid; place-items: center; }
.taskbar button svg { width: 15px; height: 15px; }
.taskbar .start { flex: none; width: 34px; }
.taskbar .start svg { width: 13px; height: 13px; }
.pinned { width: 326px; display: flex; }
.apps { width: 640px; display: flex; }
.taskbar .run { background: linear-gradient(#76b9ed, #76b9ed) bottom / 26px 2px no-repeat; }
.taskbar .active { background-color: #333; background-size: 100% 2px; }
.tray { flex: 1; display: flex; align-items: center; gap: 5px; padding: 0 3px 0 4px; border-right: 4px solid #1a1a1a; }
.tray time { margin-left: auto; text-align: center; line-height: 12px; }
.cursor { position: absolute; left: 484px; top: 404px; width: 9px; height: 14px; }
```
